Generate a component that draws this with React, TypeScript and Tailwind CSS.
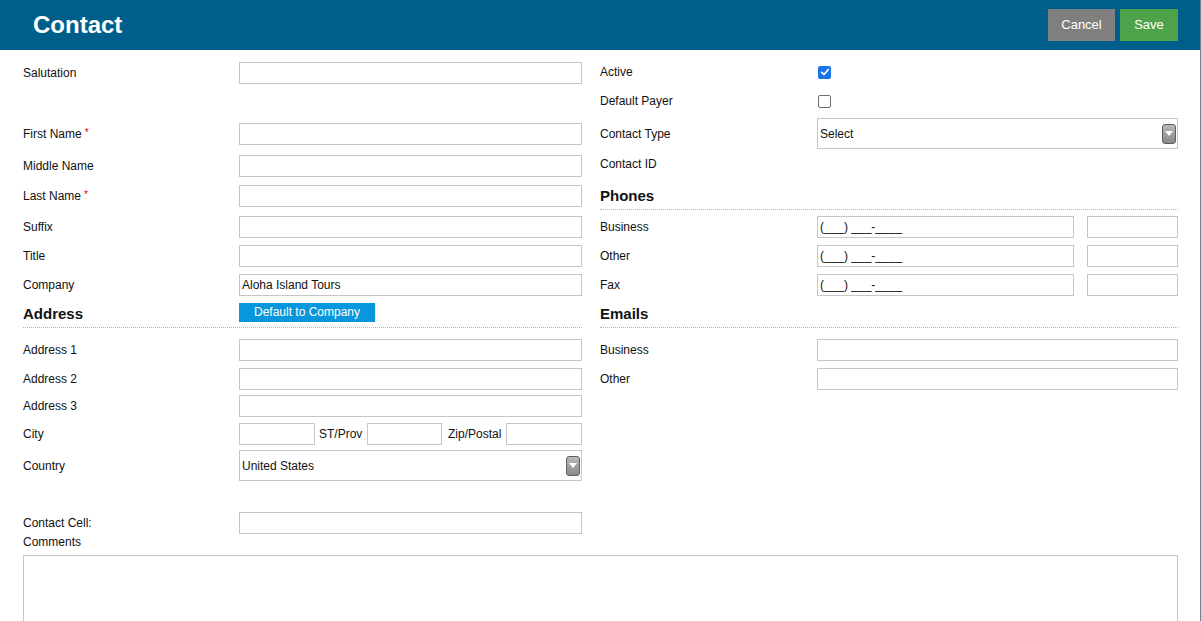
import { ReactNode } from "react";

const font = { fontFamily: '"Liberation Sans", Arial, sans-serif' };

const Input = ({ w = "flex-1", value = "" }: { w?: string; value?: string }) => (
  <div className={`${w} h-[22px] border border-[#c6c6c6] bg-white px-[2px] flex items-center text-[12px] text-[#111]`}>
    {value}
  </div>
);

const Select = ({ value }: { value: string }) => (
  <div className="flex-1 h-[31px] border border-[#c6c6c6] bg-white flex items-center justify-between pl-[2px] pr-[1px] text-[12px] text-[#111]">
    <span>{value}</span>
    <div className="w-[14px] h-[20px] rounded-[3px] border border-[#5e5e5e] bg-gradient-to-b from-[#b9b9b9] to-[#8a8a8a] flex items-center justify-center">
      <div className="w-0 h-0 border-l-[4px] border-r-[4px] border-t-[5px] border-l-transparent border-r-transparent border-t-white" />
    </div>
  </div>
);

const Row = ({
  label,
  required,
  mt,
  children,
  labelW = "w-[216px]",
}: {
  label: string;
  required?: boolean;
  mt: string;
  children?: ReactNode;
  labelW?: string;
}) => (
  <div className={`flex items-center min-h-[22px] ${mt}`}>
    <div className={`${labelW} shrink-0 text-[12px] text-[#111]`}>
      {label}
      {required && <span className="text-[#e00] text-[10px] align-top ml-[3px]">*</span>}
    </div>
    {children}
  </div>
);

const Heading = ({ title, mt, children }: { title: string; mt: string; children?: ReactNode }) => (
  <div className={`flex items-center h-[32px] border-b border-dotted border-[#b5b5b5] ${mt}`}>
    <div className="w-[216px] shrink-0 pt-[5px] text-[15px] font-bold text-[#111]">{title}</div>
    {children}
  </div>
);

const Check = ({ checked }: { checked?: boolean }) =>
  checked ? (
    <div className="w-[13px] h-[13px] rounded-[2px] bg-[#1a73e8] flex items-center justify-center">
      <svg viewBox="0 0 12 12" className="w-[10px] h-[10px]">
        <path d="M2 6.5 L4.8 9 L10 3" stroke="white" strokeWidth="2" fill="none" strokeLinecap="round" strokeLinejoin="round" />
      </svg>
    </div>
  ) : (
    <div className="w-[13px] h-[13px] rounded-[2px] border border-[#6e6e6e] bg-white" />
  );

export default function App() {
  const phone = "(___) ___-____";
  return (
    <div className="w-[1201px] h-[621px] overflow-hidden bg-white border-r border-[#6b8595]" style={font}>
      <header className="h-[50px] bg-[#005f8a] flex items-center justify-between pl-[33px] pr-[22px]">
        <h1 className="text-[24px] font-bold text-white">Contact</h1>
        <div className="flex gap-[5px]">
          <button className="w-[67px] h-[32px] bg-[#7f7f7f] text-white text-[13px]">Cancel</button>
          <button className="w-[58px] h-[32px] bg-[#4ea34a] text-white text-[13px]">Save</button>
        </div>
      </header>

      <div className="pl-[23px] pr-[22px]">
        <div className="grid grid-cols-[559px_578px] gap-x-[18px]">
          <div className="flex flex-col">
            <Row label="Salutation" mt="mt-[12px]"><Input /></Row>
            <Row label="First Name" required mt="mt-[39px]"><Input /></Row>
            <Row label="Middle Name" mt="mt-[10px]"><Input /></Row>
            <Row label="Last Name" required mt="mt-[8px]"><Input /></Row>
            <Row label="Suffix" mt="mt-[9px]"><Input /></Row>
            <Row label="Title" mt="mt-[7px]"><Input /></Row>
            <Row label="Company" mt="mt-[7px]"><Input value="Aloha Island Tours" /></Row>
            <Heading title="Address" mt="mt-0">
              <button className="w-[136px] h-[19px] mt-[1px] bg-[#0896dc] text-white text-[12px]">Default to Company</button>
            </Heading>
            <Row label="Address 1" mt="mt-[11px]"><Input /></Row>
            <Row label="Address 2" mt="mt-[7px]"><Input /></Row>
            <Row label="Address 3" mt="mt-[5px]"><Input /></Row>
            <Row label="City" mt="mt-[6px]">
              <Input w="w-[76px]" />
              <span className="w-[52px] pl-[4px] text-[12px] text-[#111]">ST/Prov</span>
              <Input w="w-[75px]" />
              <span className="w-[64px] pl-[6px] text-[12px] text-[#111]">Zip/Postal</span>
              <Input w="w-[76px]" />
            </Row>
            <Row label="Country" mt="mt-[5px]"><Select value="United States" /></Row>
            <Row label="Contact Cell:" mt="mt-[31px]"><Input /></Row>
          </div>

          <div className="flex flex-col">
            <Row label="Active" labelW="w-[217px]" mt="mt-[11px]"><div className="pl-[1px]"><Check checked /></div></Row>
            <Row label="Default Payer" labelW="w-[217px]" mt="mt-[7px]"><div className="pl-[1px]"><Check /></div></Row>
            <Row label="Contact Type" labelW="w-[217px]" mt="mt-[6px]"><Select value="Select" /></Row>
            <Row label="Contact ID" labelW="w-[217px]" mt="mt-[4px]" />
            <Heading title="Phones" mt="mt-[3px]" />
            {["Business", "Other", "Fax"].map((l, i) => (
              <Row key={l} label={l} labelW="w-[217px]" mt={i === 0 ? "mt-[6px]" : "mt-[7px]"}>
                <Input w="w-[257px]" value={phone} />
                <div className="w-[13px]" />
                <Input />
              </Row>
            ))}
            <Heading title="Emails" mt="mt-0" />
            <Row label="Business" labelW="w-[217px]" mt="mt-[11px]"><Input /></Row>
            <Row label="Other" labelW="w-[217px]" mt="mt-[7px]"><Input /></Row>
          </div>
        </div>

        <div className="h-[16px] flex items-center text-[12px] text-[#111]">Comments</div>
        <div className="mt-[5px] h-[120px] border border-[#c6c6c6] bg-white" />
      </div>
    </div>
  );
}
